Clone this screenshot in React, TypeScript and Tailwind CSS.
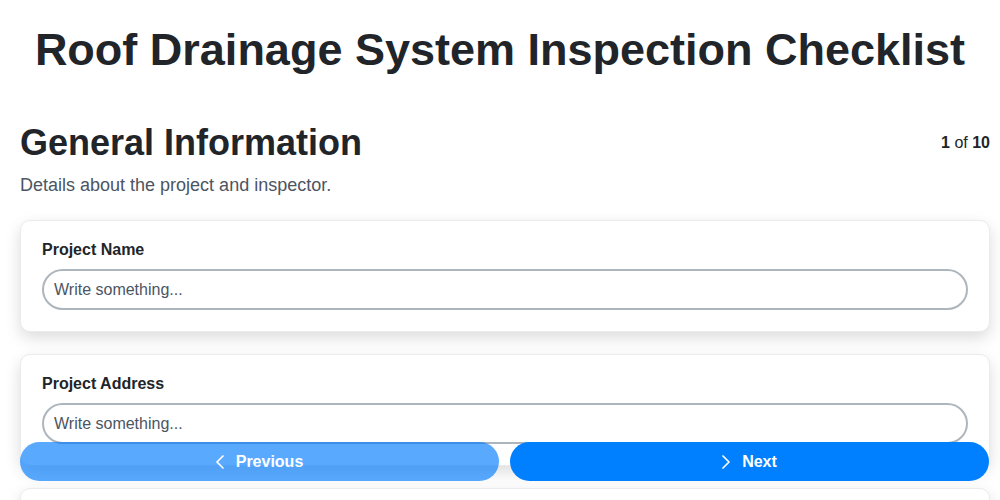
import React from "react";

const fields = ["Project Name", "Project Address", "Inspection Date", "Inspector Name"];

function Chevron({ dir }: { dir: "left" | "right" }) {
  return (
    <svg width="8" height="14" viewBox="0 0 8 14" fill="none" stroke="currentColor" strokeWidth="1.7" strokeLinecap="round" strokeLinejoin="round">
      {dir === "left" ? <path d="M7 1 L1 7 L7 13" /> : <path d="M1 1 L7 7 L1 13" />}
    </svg>
  );
}

export default function App() {
  return (
    <div className="min-h-screen bg-white text-[#212529] pt-[24px] pb-24" style={{ fontFamily: '"Liberation Sans", Arial, sans-serif' }}>
      <h1 className="px-5 text-[45px] leading-[51px] font-bold text-center mb-[46px]">Roof Drainage System Inspection Checklist</h1>
      <div className="pl-5 pr-[10px]">
        <div className="flex items-center justify-between">
          <h2 className="text-[36px] leading-[43px] font-bold">General Information</h2>
          <div className="text-base">
            <span className="font-bold">1</span> of <span className="font-bold">10</span>
          </div>
        </div>
        <p className="mt-2 text-[18px] leading-[27px] text-[#4b5563] mb-[21px]">Details about the project and inspector.</p>
        <div className="flex flex-col gap-[22px]">
          {fields.map((f) => (
            <div key={f} className="bg-white border border-[#e9ebef] rounded-[10px] shadow-[0_6px_16px_rgba(0,0,0,0.14)] pt-5 px-[21px] pb-[21px]">
              <label className="block text-base leading-[18px] font-bold mb-[10px]">{f}</label>
              <input
                type="text"
                placeholder="Write something..."
                className="w-full h-[41px] rounded-full border-2 border-[#adb5bd] px-[10px] text-base text-[#212529] placeholder:text-[#4b5563] outline-none"
                style={{ fontFamily: '"Liberation Sans", Arial, sans-serif' }}
              />
            </div>
          ))}
        </div>
      </div>
      <div className="fixed left-5 right-[11px] bottom-[19px] flex gap-[11px]">
        <button className="flex-1 h-[39px] rounded-full bg-[#007bff] opacity-65 text-white font-bold text-base flex items-center justify-center gap-[12px]">
          <Chevron dir="left" />
          Previous
        </button>
        <button className="flex-1 h-[39px] rounded-full bg-[#0080ff] text-white font-bold text-base flex items-center justify-center gap-[12px]">
          <Chevron dir="right" />
          Next
        </button>
      </div>
    </div>
  );
}
